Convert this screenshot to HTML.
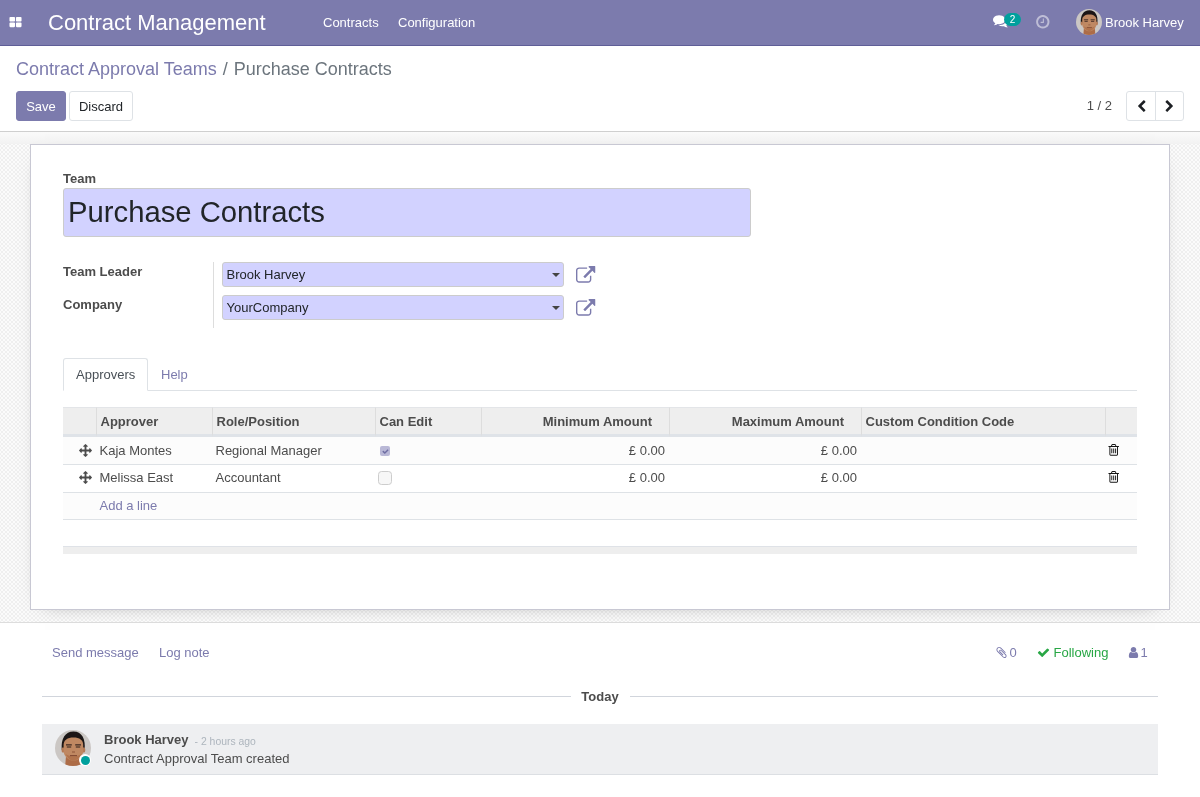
<!DOCTYPE html>
<html lang="en">
<head>
<meta charset="utf-8">
<title>Purchase Contracts - Odoo</title>
<style>
*{box-sizing:border-box}
html,body{margin:0;padding:0}
body{will-change:transform;width:1200px;height:797px;overflow:hidden;background:#fff;font-family:"Liberation Sans",Arial,sans-serif;font-size:13px;line-height:1.5;color:#4c4c4c}
a{color:#7c7bad;text-decoration:none}
svg{display:block}
/* navbar */
.nav{position:absolute;left:0;top:0;width:1200px;height:46px;background:#7c7bad;border-bottom:1px solid #5f5e97;color:#fff}
.nav .apps{position:absolute;left:10px;top:16px}
.nav .brand{position:absolute;left:48px;top:0;line-height:45px;font-size:22px;color:#fff;white-space:nowrap}
.nav .menu{position:absolute;top:0;line-height:45px;font-size:13px;color:#fff;white-space:nowrap}
.nav .user{position:absolute;left:1105px;top:0;line-height:45px;font-size:13px;white-space:nowrap}
.badge{position:absolute;left:1004px;top:13px;width:17px;height:13px;border-radius:7px;background:#00a09d;color:#fff;font-size:10px;line-height:13px;text-align:center}
/* control panel */
.cp{position:absolute;left:0;top:46px;width:1200px;height:86px;background:#fff;border-bottom:1px solid #cfcfcf}
.bc{position:absolute;left:16px;top:10px;font-size:18px;line-height:27px;white-space:nowrap;color:#6c757d}
.bc a{color:#7c7bad}
.bc .sep{padding:0 6px;color:#6c757d}
.btn{position:absolute;top:45px;height:30px;border-radius:3px;font-size:13px;line-height:28px;padding-top:1px;text-align:center;border:1px solid #7c7bad}
.btn.p{left:16px;width:50px;background:#7c7bad;color:#fff}
.btn.s{left:69px;width:64px;background:#fff;color:#212529;border-color:#dee2e6}
.pager{position:absolute;left:1086.700px;top:45px;line-height:30px;font-size:13px;color:#4c4c4c;white-space:nowrap}
.pbtns{position:absolute;left:1126px;top:45px;width:58px;height:30px;border:1px solid #dee2e6;border-radius:3px;background:#fff}
.pbtns i{position:absolute;left:28px;top:0;width:1px;height:28px;background:#dee2e6}
/* form bg */
.bg{position:absolute;left:0;top:132px;width:1200px;height:491px;background-color:#fbfbfb;
background-image:linear-gradient(45deg,#efefef 25%,transparent 25%,transparent 75%,#efefef 75%),linear-gradient(45deg,#efefef 25%,transparent 25%,transparent 75%,#efefef 75%);background-size:4px 4px;background-position:1px 1px,3px 3px;border-bottom:1px solid #ddd}
.sheet{position:absolute;left:30px;top:12px;width:1140px;height:466px;background:#fff;border:1px solid #c8c8d3;box-shadow:0 5px 20px -15px rgba(0,0,0,.55)}
.band{position:absolute;left:0;top:0;width:1200px;height:12px;background:linear-gradient(#fafafa,#f2f2f2)}

/* sheet content (coords relative to sheet inner origin = page 31,145) */
.sheet>*{position:absolute}
.lbl{font-weight:700;color:#4c4c4c;white-space:nowrap;line-height:20px}
.title{left:32px;top:43px;width:688px;height:49px;background:#d2d2ff;border:1px solid #ccc;border-radius:3px;font-size:29.25px;line-height:47px;padding-left:4px;color:#212529;white-space:nowrap}
.sel{left:191px;width:342px;height:25px;background:#d2d2ff;border:1px solid #ccc;border-radius:3px;font-size:13px;line-height:23px;padding-left:3.500px;color:#212529;white-space:nowrap}
.sel:after{content:"";position:absolute;right:3px;top:10px;border-left:4px solid transparent;border-right:4px solid transparent;border-top:4px solid #444}
.vsep{left:182px;top:117px;width:1px;height:66px;background:#ddd}
.tabs{left:32px;top:213px;width:1074px;height:33px;border-bottom:1px solid #dee2e6}
.tab{position:absolute;top:0;height:33px;line-height:31px;padding:0 12px;white-space:nowrap}
.tab.a{left:0;width:85px;border:1px solid #dee2e6;border-bottom-color:#fff;border-radius:3px 3px 0 0;background:#fff;color:#495057}
.tab.h{left:86px;top:1px;color:#7c7bad}
table.l{left:32px;top:262px;width:1074px;border-collapse:separate;border-spacing:0;table-layout:fixed;font-size:13px}
table.l th{height:30px;background:#eee;text-align:left;font-weight:700;color:#4c4c4c;padding:0 4px 0 3.500px;border-left:1px solid #ddd;border-bottom:3px solid #dfe3e8;border-top:1px solid #e3e5e8;padding-top:1px}
table.l th:first-child{border-left:0}
table.l td{height:28px;padding:0 4px 0 3.500px;border-bottom:1px solid #dee2e6;background:#fcfcfc;white-space:nowrap;overflow:hidden}
table.l .r{text-align:right}
table.l th.r{padding-right:17px}
table.l tr.w td{background:#fff;padding-bottom:1.500px}
table.l tr.al td{height:27px}
.foot{left:32px;top:401px;width:1074px;height:8px;background:#eee;border-top:1px solid #dfe2e7}

.ic{position:absolute;fill:currentColor}
.cbx{position:absolute}
#chatter{position:absolute;left:0;top:623px;width:1200px;height:174px}
#chatter>*{position:absolute;white-space:nowrap}
.today-line{left:42px;top:73px;width:1116px;height:1px;background:#d1d5dc}
.today{left:570.500px;top:64px;width:59px;text-align:center;background:#fff;font-weight:700;line-height:20px;color:#4c4c4c}
.msg{left:42px;top:101px;width:1116px;height:51px;background:#eeeff1;border-bottom:1px solid #dcdfe3}
</style>
</head>
<body>
<svg width="0" height="0" style="position:absolute"><defs>
<symbol id="i-trash" viewBox="0 0 1792 1792" preserveAspectRatio="none"><path d="M704 736v576q0 14-9 23t-23 9h-64q-14 0-23-9t-9-23v-576q0-14 9-23t23-9h64q14 0 23 9t9 23zm256 0v576q0 14-9 23t-23 9h-64q-14 0-23-9t-9-23v-576q0-14 9-23t23-9h64q14 0 23 9t9 23zm256 0v576q0 14-9 23t-23 9h-64q-14 0-23-9t-9-23v-576q0-14 9-23t23-9h64q14 0 23 9t9 23zm128 724v-948h-896v948q0 22 7 40.500t14.500 27 10.500 8.500h832q3 0 10.500-8.500t14.500-27 7-40.500zm-672-1076h448l-48-117q-7-9-17-11h-317q-10 2-17 11zm928 32v64q0 14-9 23t-23 9h-96v948q0 83-47 143.500t-113 60.500h-832q-66 0-113-58.500t-47-141.500v-952h-96q-14 0-23-9t-9-23v-64q0-14 9-23t23-9h309l70-167q15-37 54-63t79-26h320q40 0 79 26t54 63l70 167h309q14 0 23 9t9 23z"/></symbol>
<symbol id="i-arrows" viewBox="0 0 1792 1792"><path d="M1792 896q0 26-19 45l-256 256q-19 19-45 19t-45-19-19-45v-128h-384v384h128q26 0 45 19t19 45-19 45l-256 256q-19 19-45 19t-45-19l-256-256q-19-19-19-45t19-45 45-19h128v-384h-384v128q0 26-19 45t-45 19-45-19l-256-256q-19-19-19-45t19-45l256-256q19-19 45-19t45 19 19 45v128h384v-384h-128q-26 0-45-19t-19-45 19-45l256-256q19-19 45-19t45 19l256 256q19 19 19 45t-19 45-45 19h-128v384h384v-128q0-26 19-45t45-19 45 19l256 256q19 19 19 45z"/></symbol>
<symbol id="i-ext" viewBox="0 0 1792 1792"><path d="M1408 928v320q0 119-84.500 203.500t-203.500 84.500h-832q-119 0-203.500-84.500t-84.500-203.500v-832q0-119 84.500-203.500t203.500-84.500h704q14 0 23 9t9 23v64q0 14-9 23t-23 9h-704q-66 0-113 47t-47 113v832q0 66 47 113t113 47h832q66 0 113-47t47-113v-320q0-14 9-23t23-9h64q14 0 23 9t9 23zm384-864v512q0 26-19 45t-45 19-45-19l-176-176-652 652q-10 10-23 10t-23-10l-114-114q-10-10-10-23t10-23l652-652-176-176q-19-19-19-45t19-45 45-19h512q26 0 45 19t19 45z"/></symbol>
<symbol id="i-chl" viewBox="0 0 1792 1792"><path d="M1427 301l-531 531 531 531q19 19 19 45t-19 45l-166 166q-19 19-45 19t-45-19l-742-742q-19-19-19-45t19-45l742-742q19-19 45-19t45 19l166 166q19 19 19 45t-19 45z"/></symbol>
<symbol id="i-chr" viewBox="0 0 1792 1792"><path d="M1363 877l-742 742q-19 19-45 19t-45-19l-166-166q-19-19-19-45t19-45l531-531-531-531q-19-19-19-45t19-45l166-166q19-19 45-19t45 19l742 742q19 19 19 45t-19 45z"/></symbol>
<symbol id="i-check" viewBox="0 0 1792 1792"><path d="M1671 566q0 40-28 68l-724 724-136 136q-28 28-68 28t-68-28l-136-136-362-362q-28-28-28-68t28-68l136-136q28-28 68-28t68 28l294 295 656-657q28-28 68-28t68 28l136 136q28 28 28 68z"/></symbol>
<symbol id="i-user" viewBox="0 0 1792 1792"><path d="M1536 1399q0 109-62.500 187t-150.500 78h-854q-88 0-150.500-78t-62.500-187q0-85 8.500-160.500t31.500-152 58.500-131 94-89 134.500-34.500q131 128 313 128t313-128q76 0 134.500 34.500t94 89 58.500 131 31.500 152 8.500 160.500zm-256-887q0 159-112.500 271.500t-271.500 112.500-271.500-112.500-112.500-271.500 112.500-271.500 271.500-112.500 271.500 112.500 112.500 271.500z"/></symbol>
<symbol id="i-clip" viewBox="0 0 1792 1792"><path d="M1596 1385q0 117-79 196t-196 79q-135 0-235-100l-777-776q-113-115-113-271 0-159 110-270t269-111q158 0 273 113l605 606q10 10 10 22 0 16-30.500 46.500t-46.500 30.500q-13 0-23-10l-606-607q-79-77-181-77-106 0-179 75t-73 181q0 105 76 181l776 777q63 63 145 63 64 0 106-42t42-106q0-82-63-145l-581-581q-26-24-60-24-29 0-48 19t-19 48q0 32 25 59l410 410q10 10 10 22 0 16-31 47t-47 31q-12 0-22-10l-410-410q-63-61-63-149 0-82 57-139t139-57q88 0 149 63l581 581q100 98 100 235z"/></symbol>
<symbol id="i-comments" viewBox="0 0 1792 1792"><path d="M1408 768q0 139-94 257t-256.500 186.500-353.500 68.500q-86 0-176-16-124 88-278 128-36 9-86 16h-3q-11 0-20.500-8t-11.500-21q-1-3-1-6.500t.5-6.500 2-6l2.500-5 3.500-5.500 4-5 4.500-5 4-4.500q5-6 23-25t26-29.500 22.500-29 25-38.500 20.500-44q-124-72-195-177t-71-224q0-139 94-257t256.500-186.500 353.500-68.500 353.500 68.500 256.500 186.500 94 257zm384 256q0 120-71 224.500t-195 176.500q10 24 20.500 44t25 38.500 22.500 29 26 29.500 23 25q1 1 4 4.500t4.500 5 4 5 3.500 5.500l2.500 5 2 6 .5 6.500-1 6.500q-3 14-13 22t-22 7q-50-7-86-16-154-40-278-128-90 16-176 16-271 0-472-132 58 4 88 4 161 0 309-45t264-129q125-92 192-212t67-254q0-77-23-152 129 71 204 178t75 230z"/></symbol>
<symbol id="i-clock" viewBox="0 0 1792 1792"><path d="M1024 544v448q0 14-9 23t-23 9h-320q-14 0-23-9t-9-23v-64q0-14 9-23t23-9h224v-352q0-14 9-23t23-9h64q14 0 23 9t9 23zm416 352q0-148-73-273t-198-198-273-73-273 73-198 198-73 273 73 273 198 198 273 73 273-73 198-198 73-273zm224 0q0 209-103 385.500t-279.500 279.500-385.500 103-385.500-103-279.500-279.500-103-385.500 103-385.500 279.500-279.500 385.500-103 385.500 103 279.500 279.500 103 385.500z"/></symbol>
<symbol id="i-th" viewBox="0 0 1792 1792"><path d="M832 1024v384q0 52-38 90t-90 38h-512q-52 0-90-38t-38-90v-384q0-52 38-90t90-38h512q52 0 90 38t38 90zm0-768v384q0 52-38 90t-90 38h-512q-52 0-90-38t-38-90v-384q0-52 38-90t90-38h512q52 0 90 38t38 90zm896 768v384q0 52-38 90t-90 38h-512q-52 0-90-38t-38-90v-384q0-52 38-90t90-38h512q52 0 90 38t38 90zm0-768v384q0 52-38 90t-90 38h-512q-52 0-90-38t-38-90v-384q0-52 38-90t90-38h512q52 0 90 38t38 90z"/></symbol>
<symbol id="i-caret" viewBox="0 0 1792 1792"><path d="M1408 704q0 26-19 45l-448 448q-19 19-45 19t-45-19l-448-448q-19-19-19-45t19-45 45-19h896q26 0 45 19t19 45z"/></symbol>
<symbol id="face" viewBox="0 0 36 36">
<clipPath id="fc"><circle cx="18" cy="18" r="18"/></clipPath>
<filter id="fb" x="-10%" y="-10%" width="120%" height="120%"><feGaussianBlur stdDeviation="0.5"/></filter>
<g clip-path="url(#fc)">
<rect width="36" height="36" fill="#cbc7c4"/>
<g filter="url(#fb)">
<path d="M6.800 20C5.600 9 10.200 1.600 18.500 1.600c8.200 0 12.400 7.400 11 18.400z" fill="#1a1614"/>
<ellipse cx="8" cy="20" rx="1.500" ry="2.700" fill="#b47a56"/>
<ellipse cx="28.800" cy="20" rx="1.500" ry="2.700" fill="#b47a56"/>
<path d="M11 26h15l1 12h-17z" fill="#ad6c46"/>
<path d="M8.600 14.800c0-4.600 3.800-7.300 9.900-7.300s9.700 2.700 9.700 7.300v6.200c0 5-4.700 9.800-9.700 9.800S8.600 26 8.600 21z" fill="#bf8862"/>
<path d="M10.500 24c2 4.200 5.400 6.800 8 6.800s6-2.600 7.800-6.800c-2 1.600-5.200 2.300-7.800 2.300s-6-.7-8-2.300z" fill="#b1734d"/>
<path d="M11 14.900h5.800M20.200 14.900H26" stroke="#3e2a21" stroke-width="1.200" fill="none"/>
<path d="M11.800 17.100h4.400M20.800 17.100h4.400" stroke="#4e342a" stroke-width="1.500" fill="none" opacity=".85"/>
<path d="M17 22h3" stroke="#93593c" stroke-width="1.100" fill="none"/>
<path d="M15 25.600h7" stroke="#824a33" stroke-width="1.100" fill="none"/>
</g></g></symbol>
</defs></svg>
<div class="nav">
  <svg class="ic" style="left:9px;top:16px;color:#fff" width="13" height="13"><use href="#i-th"/></svg>
  <div class="brand">Contract Management</div>
  <div class="menu" style="left:323px">Contracts</div>
  <div class="menu" style="left:398px">Configuration</div>
  <svg class="ic" style="left:993px;top:13px;color:#fff" width="15.600" height="15.600"><use href="#i-comments"/></svg>
  <div class="badge">2</div>
  <svg class="ic" style="left:1035px;top:13.800px;color:#fff;opacity:.5" width="15.600" height="15.600"><use href="#i-clock"/></svg>
  <svg class="ic" style="left:1076px;top:9px" width="26" height="26"><use href="#face"/></svg>
  <div class="user">Brook Harvey</div>
</div>
<div class="cp">
  <div class="bc"><a>Contract Approval Teams</a><span class="sep">/</span>Purchase Contracts</div>
  <div class="btn p">Save</div>
  <div class="btn s">Discard</div>
  <div class="pager">1 / 2</div>
  <div class="pbtns"><i></i><svg class="ic" style="left:7.800px;top:7.900px;color:#1c1f23" width="13" height="13"><use href="#i-chl"/></svg><svg class="ic" style="left:36.200px;top:7.900px;color:#1c1f23" width="13" height="13"><use href="#i-chr"/></svg></div>
</div>
<div class="bg">
  <div class="band"></div>
  <div class="sheet" id="sheet">
    <div class="lbl" style="left:32px;top:24px">Team</div>
    <div class="title">Purchase Contracts</div>
    <div class="lbl" style="left:32px;top:117px">Team Leader</div>
    <div class="sel" style="top:117px">Brook Harvey</div>
    <div class="lbl" style="left:32px;top:150px">Company</div>
    <div class="sel" style="top:150px">YourCompany</div>
    <div class="vsep"></div>
    <svg class="ic" style="left:545px;top:120.600px;color:#7c7bad" width="19.5" height="19.5"><use href="#i-ext"/></svg>
    <svg class="ic" style="left:545px;top:153.600px;color:#7c7bad" width="19.5" height="19.5"><use href="#i-ext"/></svg>
    <div class="tabs"><div class="tab a">Approvers</div><div class="tab h">Help</div></div>
    <table class="l">
      <colgroup><col style="width:33px"><col style="width:116px"><col style="width:163px"><col style="width:106px"><col style="width:188px"><col style="width:192px"><col style="width:244px"><col style="width:32px"></colgroup>
      <thead><tr><th></th><th>Approver</th><th>Role/Position</th><th>Can Edit</th><th class="r">Minimum Amount</th><th class="r">Maximum Amount</th><th>Custom Condition Code</th><th></th></tr></thead>
      <tbody>
      <tr><td></td><td>Kaja Montes</td><td>Regional Manager</td><td></td><td class="r">£ 0.00</td><td class="r">£ 0.00</td><td></td><td></td></tr>
      <tr class="w"><td></td><td>Melissa East</td><td>Accountant</td><td></td><td class="r">£ 0.00</td><td class="r">£ 0.00</td><td></td><td></td></tr>
      <tr class="al"><td></td><td colspan="7"><a>Add a line</a></td></tr>
      </tbody>
    </table>

    <svg class="ic" style="left:48.400px;top:298.900px;color:#4c4c4c" width="13" height="13"><use href="#i-arrows"/></svg>
    <svg class="ic" style="left:48.400px;top:326.100px;color:#4c4c4c" width="13" height="13"><use href="#i-arrows"/></svg>
    <svg class="ic" style="left:1076px;top:298.300px;color:#161616" width="13.400" height="13.800"><use href="#i-trash"/></svg>
    <svg class="ic" style="left:1076px;top:324.700px;color:#161616" width="13.400" height="13.800"><use href="#i-trash"/></svg>
    <div class="cbx" style="left:349px;top:301px;width:10px;height:10px;border-radius:2px;background:#b9b8d6"><svg class="ic" style="left:1.500px;top:1.500px;color:#6f6ea3" width="7" height="7"><use href="#i-check"/></svg></div>
    <div class="cbx" style="left:347px;top:326px;width:14px;height:14px;border-radius:3.500px;background:#f7f7f7;border:1px solid #cdcdcd"></div>
    <div class="foot"></div>
  </div>
</div>
<div id="chatter">
  <a style="left:52px;top:20px;line-height:20px">Send message</a>
  <a style="left:159px;top:20px;line-height:20px">Log note</a>
  <svg class="ic" style="left:994.600px;top:23px;color:#7c7bad" width="13" height="13"><use href="#i-clip"/></svg>
  <a style="left:1009.500px;top:20px;line-height:20px">0</a>
  <svg class="ic" style="left:1037px;top:23px;color:#28a745" width="13" height="13"><use href="#i-check"/></svg>
  <span style="left:1053.500px;top:20px;line-height:20px;color:#28a745">Following</span>
  <svg class="ic" style="left:1126.700px;top:23px;color:#7c7bad" width="13" height="13"><use href="#i-user"/></svg>
  <a style="left:1140.500px;top:20px;line-height:20px">1</a>
  <div class="today-line"></div>
  <div class="today">Today</div>
  <div class="msg"></div>
  <svg class="ic" style="left:55px;top:107px" width="36" height="36"><use href="#face"/></svg>
  <div style="left:79.300px;top:131.300px;width:12px;height:12px;border-radius:50%;background:#fff"></div>
  <div style="left:80.800px;top:132.800px;width:9px;height:9px;border-radius:50%;background:#00a09d"></div>
  <div style="left:104px;top:107px;line-height:20px;font-weight:700;color:#4c4c4c">Brook Harvey</div>
  <div style="left:194.600px;top:108.500px;line-height:20px;font-size:10.400px;color:#adb5bd">- 2 hours ago</div>
  <div style="left:104px;top:126px;line-height:20px;color:#4c4c4c">Contract Approval Team created</div>
</div>
</body>
</html>
